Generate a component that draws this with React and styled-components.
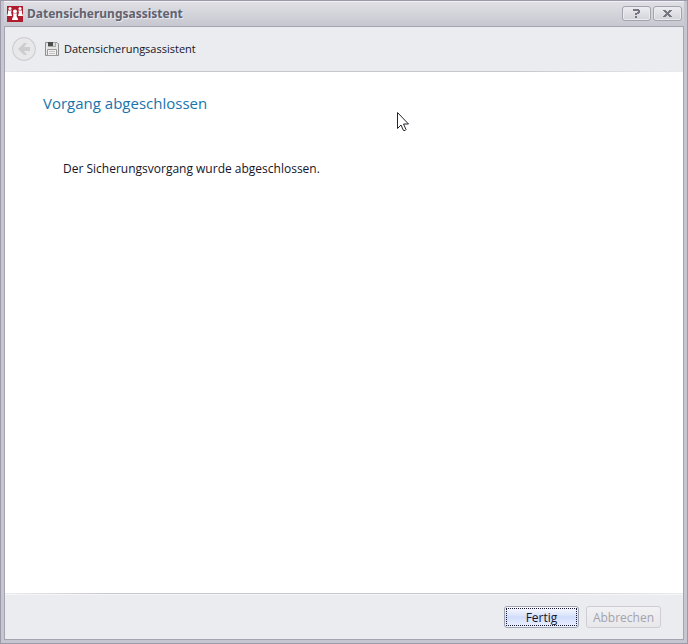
import React from "react";
import styled, { createGlobalStyle } from "styled-components";

const GlobalStyle = createGlobalStyle`
  * { box-sizing: border-box; }
  body {
    margin: 0;
    font-family: "Open Sans", "Noto Sans", sans-serif;
    font-size: 12px;
    color: #14142a;
  }
`;

const Window = styled.div`
  display: flex;
  flex-direction: column;
  min-height: 100vh;
  padding: 0 3px 3px;
  border: 1px solid #9c9aa8;
  background: #c6c6d0;
`;

const TitleBar = styled.header`
  display: flex;
  align-items: center;
  gap: 4px;
  height: 25px;
  padding: 0 2px 0 3px;
  border-top: 1px solid #f0f0f4;
  background: linear-gradient(#dfdfe5, #c7c7d0);
`;

const Title = styled.h1`
  flex: 1;
  margin: 0;
  font: bold 12px/18px "Noto Sans", "Open Sans", sans-serif;
  color: #62626e;
  text-shadow: 1px 1px 0 #e9e9ee;
`;

const CaptionButton = styled.button`
  display: flex;
  align-items: center;
  justify-content: center;
  width: 29px;
  height: 15px;
  padding: 0;
  border: 1px solid #a3a3ae;
  border-radius: 3px;
  background: linear-gradient(#ececf0, #d2d2da);
  box-shadow: inset 0 0 0 1px #ebebef;
`;

const CaptionButtons = styled.div`
  display: flex;
  gap: 2px;
  padding-bottom: 1px;
`;

const Frame = styled.div`
  display: flex;
  flex: 1;
  flex-direction: column;
  border: 1px solid #a5a5b1;
  background: #fff;
`;

const Toolbar = styled.div`
  display: flex;
  align-items: center;
  height: 45px;
  padding: 0 7px;
  border-bottom: 1px solid;
  border-image: linear-gradient(90deg, #e4e4e9, #c6c6cd 15%, #c6c6cd 75%, #ebecef) 1;
  background: #ebecef;
`;

const BackButton = styled.button`
  display: flex;
  width: 24px;
  height: 24px;
  margin-right: 9px;
  padding: 0;
  border: 0;
  background: none;
`;

const ToolbarTitle = styled.span`
  margin-left: 5px;
  font-size: 11px;
  line-height: 18px;
`;

const Content = styled.main`
  flex: 1;
  padding: 19px 38px;
`;

const Heading = styled.h2`
  margin: 0 0 45px;
  font-size: 15px;
  font-weight: 400;
  line-height: 24px;
  color: #1874ac;
`;

const Message = styled.p`
  margin: 0;
  padding-left: 20px;
  line-height: 18px;
`;

const Footer = styled.footer`
  display: flex;
  align-items: center;
  justify-content: flex-end;
  gap: 7px;
  height: 46px;
  padding: 0 22px;
  border-top: 1px solid;
  border-image: linear-gradient(90deg, #ebecef, #c6c6cd 15%, #c6c6cd 75%, #ebecef) 1;
  background: #ebecef;
  box-shadow: inset 0 1px 0 #f6f6f8;
`;

const ActionButton = styled.button`
  width: 75px;
  height: 22px;
  padding: 1px;
  border: 1px solid ${(p) => (p.$primary ? "#a0a4b0" : "#cdcdd3")};
  border-radius: 3px;
  background: ${(p) =>
    p.$primary
      ? "linear-gradient(#fafbff, #dde5fc 40%, #d0dcfb 50%, #eef3ff)"
      : "linear-gradient(#f1f1f3, #e8e8eb)"};
  font: 12px/18px "Open Sans", "Noto Sans", sans-serif;
  color: ${(p) => (p.$primary ? "#14142a" : "#a3a3ae")};
`;

const ActionLabel = styled.span`
  display: block;
  height: 18px;
  border: 1px ${(p) => (p.$focused ? "dotted #161630" : "solid transparent")};
`;

const Pointer = styled.svg`
  position: absolute;
  top: 112px;
  left: 397px;
  pointer-events: none;
`;

const AppIcon = () => (
  <svg width="16" height="16" viewBox="0 0 16 16" aria-hidden="true">
    <path fill="#b01c2e" d="M0 0h16v16H0z" />
    <g fill="#fff">
      <circle cx="3" cy="2.500" r="1.500" />
      <circle cx="13" cy="2.500" r="1.500" />
      <path d="M1 4.500h4L4 6l1 4H0l1-3zM11 4.500h4V7l1 3h-5l1-4z" />
      <circle cx="8" cy="5.500" r="2" />
      <path d="M6 7.500h4L9.500 10l1.500 3v1H5v-1l1.500-3z" />
    </g>
  </svg>
);

const HelpIcon = () => (
  <svg width="7" height="9" viewBox="0 0 7 9" shapeRendering="crispEdges" aria-hidden="true">
    <path fill="#777783" d="M0 0h6v1h1v3H6v1H4v1H2V4h2V3h1V2H0zM2 7h2v2H2z" />
  </svg>
);

const CloseIcon = () => (
  <svg width="9" height="7" viewBox="0 0 9 7" shapeRendering="crispEdges" aria-hidden="true">
    <path fill="#777783" d="M0 0h3v1h1v1h1V1h1V0h3v1H8v1H7v1H6v1h1v1h1v1h1v1H6V6H5V5H4v1H3v1H0V6h1V5h1V4h1V3H2V2H1V1H0z" />
  </svg>
);

const BackIcon = () => (
  <svg width="24" height="24" viewBox="0 0 24 24" aria-hidden="true">
    <circle cx="12" cy="12" r="11.3" fill="#e8e8eb" stroke="#d0d0d4" strokeWidth="1.2" />
    <path fill="#cdcdd1" d="M6 12l6-6h3l-3 4h6v4h-6l3 4h-3z" />
  </svg>
);

const DiskIcon = () => (
  <svg width="14" height="14" viewBox="0 0 14 14" aria-hidden="true">
    <path fill="#e6e6e7" stroke="#8f8f8f" d="M.5.5h11.5l1.5 1.5v11.5H.5z" />
    <path fill="#a8a8a8" d="M3 0h8v5H3z" />
    <path fill="#4b4b4b" d="M3 0h5v4H3z" />
    <path fill="#dedede" d="M8 1h2v3H8z" />
    <path fill="#f2f2f2" stroke="#9a9a9a" d="M2.500 7.500h9v6h-9z" />
    <path stroke="#c2c2c2" d="M4 9.500h6M4 11.500h6" />
  </svg>
);

export default function App() {
  return (
    <>
      <GlobalStyle />
      <Window>
        <TitleBar>
          <AppIcon />
          <Title>Datensicherungsassistent</Title>
          <CaptionButtons>
            <CaptionButton type="button" aria-label="Hilfe"><HelpIcon /></CaptionButton>
            <CaptionButton type="button" aria-label="Schließen"><CloseIcon /></CaptionButton>
          </CaptionButtons>
        </TitleBar>
        <Frame>
          <Toolbar>
            <BackButton type="button" aria-label="Zurück" disabled><BackIcon /></BackButton>
            <DiskIcon />
            <ToolbarTitle>Datensicherungsassistent</ToolbarTitle>
          </Toolbar>
          <Content>
            <Heading>Vorgang abgeschlossen</Heading>
            <Message>Der Sicherungsvorgang wurde abgeschlossen.</Message>
          </Content>
          <Footer>
            <ActionButton type="button" $primary><ActionLabel $focused>Fertig</ActionLabel></ActionButton>
            <ActionButton type="button" disabled><ActionLabel>Abbrechen</ActionLabel></ActionButton>
          </Footer>
        </Frame>
      </Window>
      <Pointer width="13" height="20" viewBox="0 0 13 20" aria-hidden="true">
        <path fill="#fff" stroke="#24242c" d="M.5.5v16l3.500-3.500 2.500 5.500q2 .5 2.500-1l-2.500-5.500h5z" />
      </Pointer>
    </>
  );
}
